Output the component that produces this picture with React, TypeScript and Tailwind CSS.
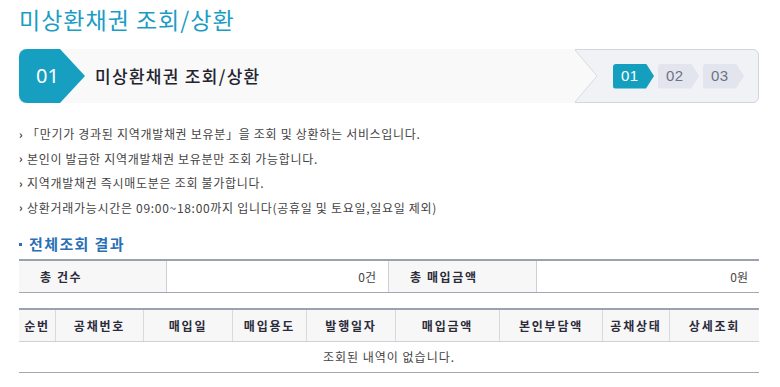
import React from "react";

const KR = { fontFamily: '"Noto Sans CJK KR", "Noto Sans", sans-serif' };

function StepBadge({ label, active }: { label: string; active?: boolean }) {
  return (
    <div
      className={
        "flex h-[25px] w-[41px] items-center rounded-l-[3px] pl-[8px] text-[15px] " +
        (active ? "bg-[#159fbf] text-white" : "bg-[#e2e5ed] text-[#6d7284]")
      }
      style={{
        clipPath: "polygon(0 0, calc(100% - 8px) 0, 100% 50%, calc(100% - 8px) 100%, 0 100%)",
        fontFamily: '"Liberation Sans", Arial, sans-serif',
        letterSpacing: "0.5px",
      }}
    >
      {label}
    </div>
  );
}

export default function App() {
  const bullets = [
    "「만기가 경과된 지역개발채권 보유분」을 조회 및 상환하는 서비스입니다.",
    "본인이 발급한 지역개발채권 보유분만 조회 가능합니다.",
    "지역개발채권 즉시매도분은 조회 불가합니다.",
    "상환거래가능시간은 09:00~18:00까지 입니다(공휴일 및 토요일,일요일 제외)",
  ];
  const cols: [string, string][] = [
    ["순번", "w-[36px]"],
    ["공채번호", "w-[88px]"],
    ["매입일", "w-[89px]"],
    ["매입용도", "w-[74px]"],
    ["발행일자", "w-[89px]"],
    ["매입금액", "w-[104px]"],
    ["본인부담액", "w-[103px]"],
    ["공채상태", "w-[67px]"],
    ["상세조회", "w-[90px]"],
  ];
  return (
    <div className="h-[387px] w-[780px] overflow-hidden bg-white" style={KR}>
      <div className="pl-[19px] pr-[21px]">
        {/* Title */}
        <h1 className="pt-[3px] text-[23px] font-normal leading-[32px] tracking-[1px] text-[#1a9dc5]">
          미상환채권 조회/상환
        </h1>

        {/* Step box */}
        <div className="mt-[14px] flex h-[54px] rounded-[6px] border border-[#d3d6dc] bg-[#f1f2f5]">
          <div className="-my-px -ml-px flex flex-1 items-center rounded-l-[8px] bg-[#f9f9f9]">
            <div
              className="flex h-[54px] w-[66px] items-center rounded-l-[8px] bg-[#169fc0] pl-[17px] text-[20px] text-white"
              style={{
                clipPath: "polygon(0 0, 41px 0, 100% 50%, 41px 100%, 0 100%)",
                fontFamily: '"Noto Sans", sans-serif',
              }}
            >
              01
            </div>
            <span className="ml-[10px] text-[17px] font-medium tracking-[1.3px] text-[#23232e]">
              미상환채권 조회/상환
            </span>
          </div>
          <svg width="23" height="52" viewBox="0 0 23 52" className="block shrink-0">
            <polygon points="0,0 22,26 0,52" fill="#f9f9f9" />
            <polyline points="0,0 22,26 0,52" fill="none" stroke="#d8dbe0" strokeWidth="1" />
          </svg>
          <div className="flex w-[160px] items-center gap-[4px] pl-[15px]">
            <StepBadge label="01" active />
            <StepBadge label="02" />
            <StepBadge label="03" />
          </div>
        </div>

        {/* Bullets */}
        <ul className="mt-[19px]">
          {bullets.map((b) => (
            <li key={b} className="flex h-[24.5px] items-center text-[12px] tracking-[0.7px] text-[#444]">
              <span className="mr-[4px] w-[4px] text-[11px] font-bold leading-none text-[#333]">›</span>
              <span>{b}</span>
            </li>
          ))}
        </ul>

        {/* Section title */}
        <div className="mt-[14px] flex h-[20px] items-center">
          <span className="mr-[7px] h-[3px] w-[3px] bg-[#2a70b8]" />
          <span className="text-[15px] font-bold tracking-[1.4px] text-[#2a6fb6]">전체조회 결과</span>
        </div>

        {/* Summary table */}
        <div className="mt-[5px] flex border-t-2 border-b border-t-[#9aa2ad] border-b-[#a3a9b3] text-[12px]">
          <div className="flex h-[31px] w-[147px] items-center bg-[#f7f7f7] pl-[21px] font-bold tracking-[1.6px] text-[#2b2b3a]">
            총 건수
          </div>
          <div className="flex h-[31px] w-[222px] items-center justify-end border-l border-[#ccd1d8] pr-[12px] text-[#444]">
            0건
          </div>
          <div className="flex h-[31px] w-[148px] items-center border-l border-[#ccd1d8] bg-[#f7f7f7] pl-[21px] font-bold tracking-[1.6px] text-[#2b2b3a]">
            총 매입금액
          </div>
          <div className="flex h-[31px] w-[223px] items-center justify-end border-l border-[#ccd1d8] pr-[11px] text-[#444]">
            0원
          </div>
        </div>

        {/* List table */}
        <div className="mt-[15px] border-t-2 border-b border-t-[#9aa2ad] border-b-[#a3a9b3] text-[12px]">
          <div className="flex border-b border-[#cdd2d9] bg-[#f7f7f7]">
            {cols.map(([c, w], i) => (
              <div
                key={c}
                className={
                  "flex h-[31px] items-center justify-center font-bold tracking-[1.8px] text-[#2b2b3a] " +
                  w +
                  (i > 0 ? " border-l border-[#d6d9de]" : "")
                }
              >
                {c}
              </div>
            ))}
          </div>
          <div className="flex h-[30px] items-center justify-center tracking-[1px] text-[#444]">
            조회된 내역이 없습니다.
          </div>
        </div>
      </div>
    </div>
  );
}
